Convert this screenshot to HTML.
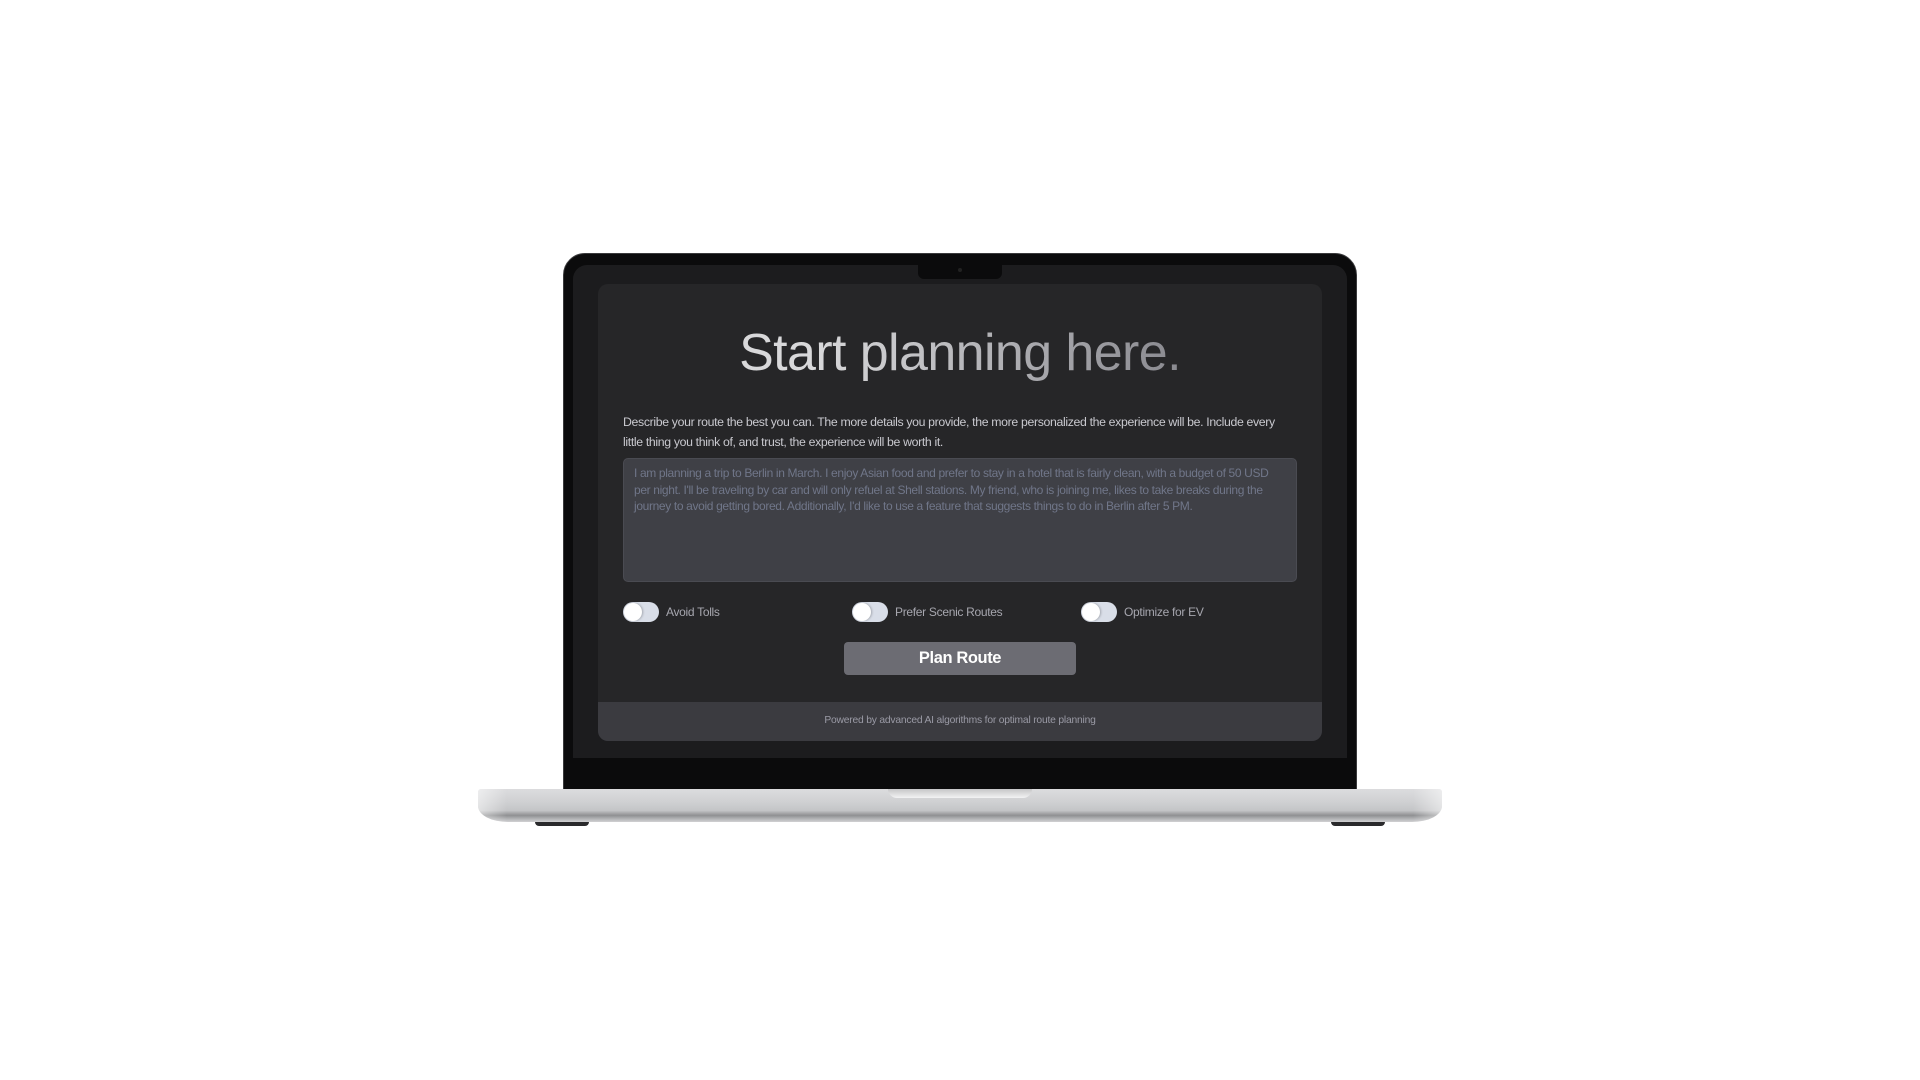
<!DOCTYPE html>
<html><head><meta charset="utf-8">
<style>
*{margin:0;padding:0;box-sizing:border-box}
body{width:1920px;height:1080px;background:#fff;position:relative;overflow:hidden;font-family:"Liberation Sans",sans-serif}
.lid{position:absolute;left:563px;top:253px;width:794px;height:537px;background:#0b0b0c;border-radius:22px 22px 0 0;border:1px solid #3a3a3c}
.bezel{position:absolute;left:573px;top:265px;width:774px;height:493px;background:#1c1c1e;border-radius:14px 14px 0 0}
.notch{position:absolute;left:918px;top:265px;width:84px;height:14px;background:#0b0b0c;border-radius:0 0 6px 6px}
.cam{position:absolute;left:958px;top:268px;width:4px;height:4px;border-radius:50%;background:#222}
.card{position:absolute;left:598px;top:284px;width:724px;height:457px;background:#262628;border-radius:10px;overflow:hidden}
h1{position:absolute;left:0;width:724px;top:39px;text-align:center;font-weight:300;font-size:52px;letter-spacing:-0.6px;background:linear-gradient(90deg,#d8d8da 30%,#8a8a90 80%);-webkit-background-clip:text;background-clip:text;color:transparent}
.desc{position:absolute;left:25px;top:128px;width:660px;font-size:12.3px;line-height:20px;color:#c9c9cf;letter-spacing:-0.35px}
.ta{position:absolute;left:25px;top:174px;width:674px;height:124px;background:#3f4046;border-radius:5px;border:1px solid #4a4b52;padding:6px 22px 6px 10px;font-size:12px;line-height:16.5px;color:#707689;letter-spacing:-0.35px}
.tg{position:absolute;top:318px;display:flex;align-items:center;font-size:12px;color:#a6a6ae;letter-spacing:-0.3px}
.sw{width:36px;height:20px;border-radius:10px;background:#d9dee8;position:relative;margin-right:7px}
.sw::after{content:"";position:absolute;left:1px;top:1px;width:18px;height:18px;border-radius:50%;background:#fff;box-shadow:1px 0 2px rgba(0,0,0,.25)}
.btn{position:absolute;left:246px;top:358px;width:232px;height:33px;background:#6c6c73;border-radius:4px;color:#fff;font-weight:bold;font-size:16.5px;text-align:center;line-height:33px;letter-spacing:-0.4px}
.foot{position:absolute;left:0;top:418px;width:724px;height:39px;background:#3b3b40;text-align:center;line-height:38px;font-size:10.3px;color:#9a9aa5;letter-spacing:-0.2px}
.base{position:absolute;left:478px;top:789px;width:964px;height:33px;background:linear-gradient(180deg,#dcdcde 0%,#cfd0d2 40%,#c4c5c7 65%,#8f9092 80%,#b8b9bb 92%,#d0d0d2 100%);border-radius:3px 3px 30px 30px/3px 3px 16px 16px}
.base::before{content:"";position:absolute;inset:0;border-radius:inherit;background:linear-gradient(90deg,rgba(255,255,255,.5),rgba(255,255,255,0) 3%,rgba(255,255,255,0) 97%,rgba(255,255,255,.5))}
.bnotch{position:absolute;left:888px;top:789px;width:144px;height:9px;background:linear-gradient(#c5c5c7,#f2f2f3);border-radius:0 0 10px 10px}
.foot1,.foot2{position:absolute;top:822px;width:54px;height:4px;background:#2a2a2c;border-radius:0 0 4px 4px}
.foot1{left:535px}.foot2{left:1331px}
</style></head><body>
<div class="lid"></div>
<div class="bezel"></div>
<div class="notch"></div><div class="cam"></div>
<div class="card">
<h1>Start planning here.</h1>
<div class="desc">Describe your route the best you can. The more details you provide, the more personalized the experience will be. Include every little thing you think of, and trust, the experience will be worth it.</div>
<div class="ta">I am planning a trip to Berlin in March. I enjoy Asian food and prefer to stay in a hotel that is fairly clean, with a budget of 50 USD per night. I'll be traveling by car and will only refuel at Shell stations. My friend, who is joining me, likes to take breaks during the journey to avoid getting bored. Additionally, I'd like to use a feature that suggests things to do in Berlin after 5 PM.</div>
<div class="tg" style="left:25px"><div class="sw"></div>Avoid Tolls</div>
<div class="tg" style="left:254px"><div class="sw"></div>Prefer Scenic Routes</div>
<div class="tg" style="left:483px"><div class="sw"></div>Optimize for EV</div>
<div class="btn">Plan Route</div>
<div class="foot">Powered by advanced AI algorithms for optimal route planning</div>
</div>
<div class="base"></div>
<div class="bnotch"></div>
<div class="foot1"></div><div class="foot2"></div>
</body></html>
